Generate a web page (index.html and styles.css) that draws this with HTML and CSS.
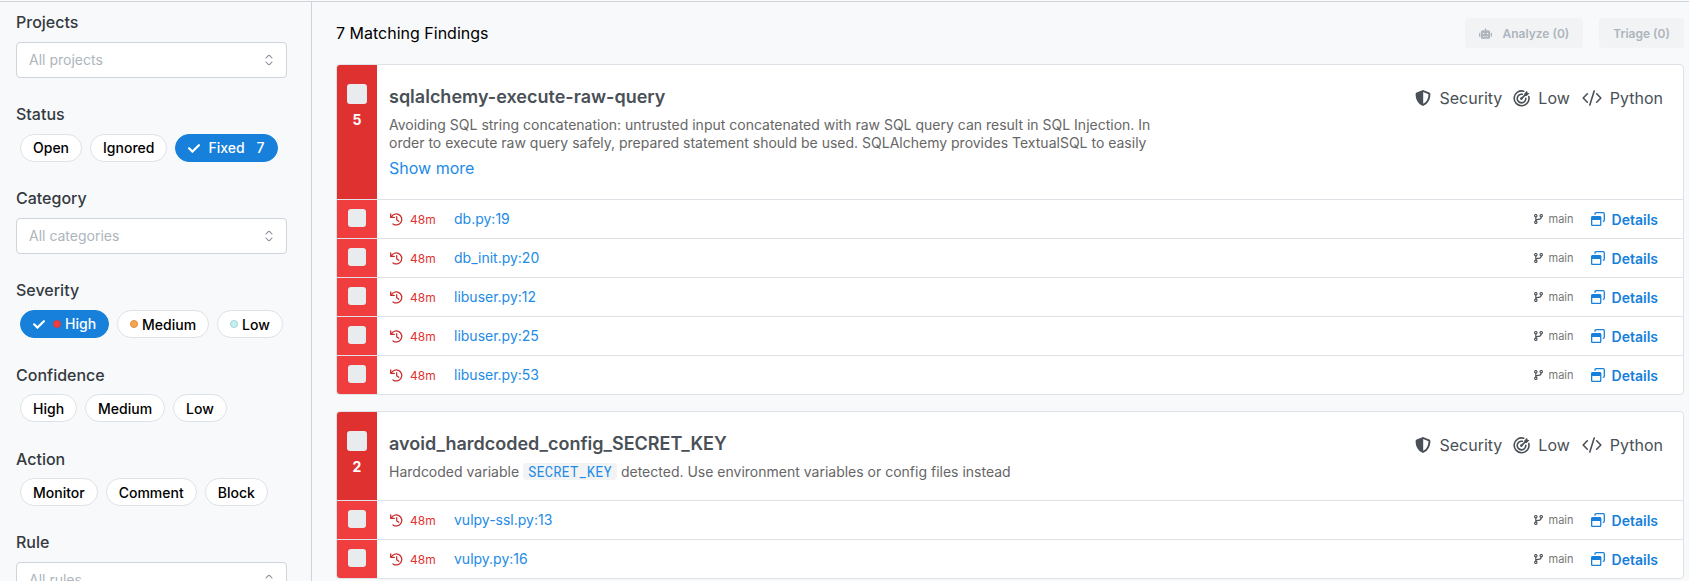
FILE: index.html
```html
<!DOCTYPE html>
<html lang="en">
<head>
<meta charset="utf-8">
<title>Findings</title>
<link rel="stylesheet" href="styles.css">
</head>
<body>
<svg class="sprite" width="0" height="0" aria-hidden="true">
  <symbol id="i-updown" viewBox="0 0 10 12"><path d="M2 4l2-2.200c.6-.6 1.400-.6 2 0L8 4M2 8l2 2.200c.6.6 1.400.6 2 0L8 8" fill="none" stroke="currentColor" stroke-width="1.100" stroke-linecap="round"/></symbol>
  <symbol id="i-check" viewBox="0 0 12 9"><path d="M1.100 4.300l3.300 3.300L10.900 1.200" fill="none" stroke="currentColor" stroke-width="2.200" stroke-linecap="round"/></symbol>
  <symbol id="i-robot" viewBox="0 0 640 512"><path fill="currentColor" fill-rule="evenodd" d="M32 224h32v192H32c-18 0-32-14-32-32V256c0-18 14-32 32-32zM544 184v264c0 35-29 64-64 64H160c-35 0-64-29-64-64V184c0-49 39-88 88-88h104V32c0-18 14-32 32-32s32 14 32 32v64h104c49 0 88 39 88 88zM264 256a40 40 0 1 0-80 0 40 40 0 0 0 80 0zM256 384h-64v32h64v-32zM352 384h-64v32h64v-32zM456 256a40 40 0 1 0-80 0 40 40 0 0 0 80 0zM448 384h-64v32h64v-32zM640 256v128c0 18-14 32-32 32h-32V224h32c18 0 32 14 32 32z"/></symbol>
  <symbol id="i-shield" viewBox="0 0 16 16"><path fill="currentColor" fill-rule="evenodd" d="M8 0l6.3 2.4c.7.3 1.1.8 1.1 1.5 0 5-2 9.700-7.400 12.100C2.600 13.600.6 8.900.6 3.900c0-.7.4-1.200 1.100-1.500zM8.200 2.100v11.700c3.600-1.900 5.200-5.300 5.300-9.600z"/></symbol>
  <symbol id="i-target" viewBox="0 0 17 17"><g fill="none" stroke="currentColor" stroke-width="1.600" stroke-linecap="round"><path d="M10.700 1.200A7.400 7.400 0 1 0 15.800 6.600"/><path d="M9.300 4.300a4.300 4.300 0 1 0 3.500 3.900"/><path d="M8.400 8.600L13 4"/></g><circle cx="8.400" cy="8.600" r="1.300" fill="currentColor"/><path fill="currentColor" d="M11.300 3.600L14 .8l.5 1.900 1.900.5-2.700 2.700-2 .1z"/></symbol>
  <symbol id="i-code" viewBox="0 0 20 16"><path d="M5.300 3.800L1.200 8l4.100 4.200M14.700 3.800L18.800 8l-4.100 4.200M12.200 1L7.800 15" fill="none" stroke="currentColor" stroke-width="1.600" stroke-linecap="round" stroke-linejoin="round"/></symbol>
  <symbol id="i-history" viewBox="0 0 13 13"><path d="M1.200 4.300A5.500 5.500 0 1 1 3 10.900M.7.800v3.600h3.600M6.700 3.600v3.200l2 1.500" fill="none" stroke="currentColor" stroke-width="1.250" stroke-linecap="round" stroke-linejoin="round"/></symbol>
  <symbol id="i-branch" viewBox="0 0 9 10"><g fill="none" stroke="currentColor" stroke-width="1.100"><circle cx="1.800" cy="1.700" r="1.200"/><circle cx="7.200" cy="1.700" r="1.200"/><circle cx="1.800" cy="8.300" r="1.200"/><path d="M1.800 2.900v4.200M7.200 2.900c0 2.200-1 2.400-3 2.500-1.600.1-2.400.4-2.400 1.700"/></g></symbol>
  <symbol id="i-windows" viewBox="0 0 14 14"><path d="M4 2.800V1.900C4 1.200 4.500.700 5.200.700h6.900c.7 0 1.200.5 1.200 1.200v6.200c0 .7-.5 1.200-1.200 1.200h-.3" fill="none" stroke="currentColor" stroke-width="1.300"/><path fill="currentColor" fill-rule="evenodd" d="M1.600 4h7.200c.9 0 1.600.7 1.600 1.600v6.800c0 .9-.7 1.600-1.600 1.600H1.600C.7 14 0 13.300 0 12.400V5.600C0 4.700.7 4 1.600 4zM1.300 8v4.400c0 .2.100.3.300.3h7.200c.2 0 .3-.1.300-.3V8z"/></symbol>
</svg>
<div class="app">
  <aside class="sidebar">
    <section class="filter"><h2 class="label">Projects</h2><div class="select"><span>All projects</span><svg class="updown"><use href="#i-updown"/></svg></div></section>
    <section class="filter"><h2 class="label">Status</h2><div class="chips"><span class="chip">Open</span><span class="chip">Ignored</span><span class="chip on"><svg class="check"><use href="#i-check"/></svg>Fixed<span class="count">7</span></span></div></section>
    <section class="filter"><h2 class="label">Category</h2><div class="select"><span>All categories</span><svg class="updown"><use href="#i-updown"/></svg></div></section>
    <section class="filter"><h2 class="label">Severity</h2><div class="chips"><span class="chip on"><svg class="check"><use href="#i-check"/></svg><i class="dot high"></i>High</span><span class="chip"><i class="dot medium"></i><span class="drop">Medium</span></span><span class="chip"><i class="dot low"></i><span class="drop">Low</span></span></div></section>
    <section class="filter lowered"><h2 class="label">Confidence</h2><div class="chips"><span class="chip"><span class="drop">High</span></span><span class="chip"><span class="drop">Medium</span></span><span class="chip"><span class="drop">Low</span></span></div></section>
    <section class="filter lowered"><h2 class="label">Action</h2><div class="chips"><span class="chip"><span class="drop">Monitor</span></span><span class="chip"><span class="drop">Comment</span></span><span class="chip"><span class="drop">Block</span></span></div></section>
    <section class="filter"><h2 class="label">Rule</h2><div class="select"><span>All rules</span><svg class="updown"><use href="#i-updown"/></svg></div></section>
  </aside>
  <main class="main">
    <header class="toolbar">
      <span class="total">7 Matching Findings</span>
      <button class="btn analyze" disabled><svg class="robot"><use href="#i-robot"/></svg><span>Analyze (0)</span></button>
      <button class="btn" disabled><span>Triage (0)</span></button>
    </header>
    <article class="card">
      <div class="head tall">
        <div class="strip"><i class="box"></i><b class="num">5</b></div>
        <div class="info">
          <h3 class="title">sqlalchemy-execute-raw-query</h3>
          <p class="desc">Avoiding SQL string concatenation: untrusted input concatenated with raw SQL query can result in SQL Injection. In<br>order to execute raw query safely, prepared statement should be used. SQLAlchemy provides TextualSQL to easily</p>
          <a class="more">Show more</a>
        </div>
        <div class="tags"><svg class="shield"><use href="#i-shield"/></svg><span class="t-sec">Security</span><svg class="target"><use href="#i-target"/></svg><span class="t-low">Low</span><svg class="code-icon"><use href="#i-code"/></svg><span class="t-lang">Python</span></div>
      </div>
      <div class="row"><div class="strip"><i class="box"></i></div><svg class="history"><use href="#i-history"/></svg><span class="age">48m</span><a class="file">db.py:19</a><svg class="branch"><use href="#i-branch"/></svg><span class="ref">main</span><svg class="windows"><use href="#i-windows"/></svg><a class="details">Details</a></div>
      <div class="row"><div class="strip"><i class="box"></i></div><svg class="history"><use href="#i-history"/></svg><span class="age">48m</span><a class="file">db_init.py:20</a><svg class="branch"><use href="#i-branch"/></svg><span class="ref">main</span><svg class="windows"><use href="#i-windows"/></svg><a class="details">Details</a></div>
      <div class="row"><div class="strip"><i class="box"></i></div><svg class="history"><use href="#i-history"/></svg><span class="age">48m</span><a class="file">libuser.py:12</a><svg class="branch"><use href="#i-branch"/></svg><span class="ref">main</span><svg class="windows"><use href="#i-windows"/></svg><a class="details">Details</a></div>
      <div class="row"><div class="strip"><i class="box"></i></div><svg class="history"><use href="#i-history"/></svg><span class="age">48m</span><a class="file">libuser.py:25</a><svg class="branch"><use href="#i-branch"/></svg><span class="ref">main</span><svg class="windows"><use href="#i-windows"/></svg><a class="details">Details</a></div>
      <div class="row"><div class="strip"><i class="box"></i></div><svg class="history"><use href="#i-history"/></svg><span class="age">48m</span><a class="file">libuser.py:53</a><svg class="branch"><use href="#i-branch"/></svg><span class="ref">main</span><svg class="windows"><use href="#i-windows"/></svg><a class="details">Details</a></div>
    </article>
    <article class="card">
      <div class="head">
        <div class="strip"><i class="box"></i><b class="num">2</b></div>
        <div class="info">
          <h3 class="title">avoid_hardcoded_config_SECRET_KEY</h3>
          <p class="desc">Hardcoded variable <code class="code">SECRET_KEY</code> detected. Use environment variables or config files instead</p>
        </div>
        <div class="tags"><svg class="shield"><use href="#i-shield"/></svg><span class="t-sec">Security</span><svg class="target"><use href="#i-target"/></svg><span class="t-low">Low</span><svg class="code-icon"><use href="#i-code"/></svg><span class="t-lang">Python</span></div>
      </div>
      <div class="row"><div class="strip"><i class="box"></i></div><svg class="history"><use href="#i-history"/></svg><span class="age">48m</span><a class="file">vulpy-ssl.py:13</a><svg class="branch"><use href="#i-branch"/></svg><span class="ref">main</span><svg class="windows"><use href="#i-windows"/></svg><a class="details">Details</a></div>
      <div class="row"><div class="strip"><i class="box"></i></div><svg class="history"><use href="#i-history"/></svg><span class="age">48m</span><a class="file">vulpy.py:16</a><svg class="branch"><use href="#i-branch"/></svg><span class="ref">main</span><svg class="windows"><use href="#i-windows"/></svg><a class="details">Details</a></div>
    </article>
  </main>
</div>
</body>
</html>
```
FILE: styles.css
```css
* { box-sizing: border-box; }
body { margin: 0; height: 581px; overflow: hidden; background: #f8f9fb; color: #000; font: 16px/24px Inter, "Liberation Sans", sans-serif; }
h2, h3, p { margin: 0; }
svg { flex: none; display: block; }
.sprite { position: absolute; }
.app { display: flex; height: 580px; margin-top: 1px; border-top: 1px solid #ced4da; }

.sidebar { flex: none; width: 312px; padding: 8px 24px 0 16px; border-right: 1px solid #ced4da; overflow: hidden; }
.filter { margin-bottom: 24px; }
.label { margin-bottom: 8px; font-size: 16px; font-weight: 500; line-height: 24px; color: #343a40; }
.lowered .label { padding-top: 1px; margin-bottom: 7px; }
.select { display: flex; align-items: center; justify-content: space-between; height: 36px; padding: 0 12px; background: #fff; border: 1px solid #ced4da; border-radius: 4px; font-size: 14px; color: #adb5bd; }
.updown { width: 10px; height: 12px; color: #868e96; }
.chips { display: flex; gap: 8px; padding-left: 4px; }
.chip { display: flex; align-items: center; height: 28px; padding: 0 12px; background: #fff; border: 1px solid #dee2e6; border-radius: 14px; font-size: 14px; font-weight: 500; }
.drop { padding-top: 2px; }
.on { background: #1680db; border-color: #1680db; color: #fff; }
.check { width: 12px; height: 9px; margin-right: 8px; }
.count { margin-left: 12px; }
.dot { width: 8px; height: 8px; margin-right: 4px; border-radius: 50%; border: 1px solid; }
.high { background: #f03e3e; border-color: #d63a42; }
.medium { background: #f7a44b; border-color: #d88f42; }
.low { background: #c5f0f0; border-color: #a5d4d6; }

.main { flex: 1; min-width: 0; padding: 16px 5px 0 24px; }
.toolbar { display: flex; align-items: center; height: 30px; margin-bottom: 16px; }
.total { flex: 1; }
.btn { display: flex; align-items: center; height: 30px; padding: 0 14px; border: 0; border-radius: 4px; background: #f1f3f5; color: #adb5bd; font: 600 12px/30px Inter, sans-serif; }
.btn span { padding-top: 1px; }
.analyze { margin-right: 16px; }
.robot { width: 13px; height: 11px; margin-right: 10.5px; }

.card { margin-bottom: 16px; border: 1px solid #dee2e6; border-radius: 4px; background: #fff; overflow: hidden; }
.head { display: flex; height: 88px; }
.tall { height: 134px; }
.strip { flex: none; display: flex; flex-direction: column; align-items: center; width: 40px; background: #e03131; }
.head .strip { padding-top: 19px; }
.box { width: 20px; height: 20px; border-radius: 3px; background: #e9ecef; }
.num { margin-top: 6px; font-size: 14px; line-height: 20px; color: #fff; }
.info { flex: 1; padding: 19px 0 0 12px; }
.title { font-size: 18px; font-weight: 600; line-height: 26px; color: #495057; }
.desc { margin-top: 6px; font-size: 14px; line-height: 18px; color: #666; white-space: nowrap; }
.more { display: block; margin-top: 4px; line-height: 24px; color: #228be6; }
.code { display: inline-block; padding: 0 5px; border-radius: 4px; background: #f1f3f5; color: #228be6; font: 14px/17px "Roboto Mono", "DejaVu Sans Mono", monospace; }
.tags { display: flex; align-items: center; height: 24px; margin: 21px 20px 0 0; color: #495057; }
.shield { width: 16px; height: 16px; margin-right: 8px; }
.target { width: 17px; height: 17px; margin-right: 8px; }
.code-icon { width: 20px; height: 16px; margin-right: 8px; }
.t-sec { margin-right: 11px; }
.t-low { margin-right: 12px; }

.row { display: flex; align-items: center; height: 39px; border-top: 1px solid #dee2e6; }
.row .strip { align-self: stretch; padding-top: 9px; background: #f03e3e; margin-right: 13px; }
.row .box { width: 18px; height: 18px; }
.history { width: 13px; height: 13px; margin-right: 7px; color: #c92a2a; }
.age { width: 44px; padding-top: 1px; font-size: 12px; color: #e03131; }
.file { flex: 1; font-size: 14px; color: #228be6; }
.branch { width: 9px; height: 10px; margin-right: 6px; color: #495057; }
.ref { width: 42px; font-size: 11px; color: #777; }
.windows { width: 14px; height: 14px; margin-right: 7px; color: #1680db; }
.details { padding-top: 2px; margin-right: 25px; font-size: 14px; font-weight: 600; color: #1680db; }
```
